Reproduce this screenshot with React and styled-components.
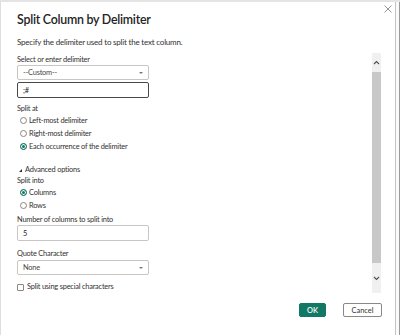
import React from "react";
import styled, { createGlobalStyle } from "styled-components";

const Global = createGlobalStyle`
  html, body { margin: 0; padding: 0; background: #fff; overflow: hidden; }
  body { font-family: Lato, "Open Sans", sans-serif; color: #323130; }
  * { box-sizing: border-box; }
`;

const Frame = styled.div`
  width: 400px;
  height: 335px;
  display: flex;
  flex-direction: column;
`;

const TopStrip = styled.div`
  height: 2px;
  background: #e4e4e4;
  flex: none;
`;

const Row = styled.div`
  flex: 1;
  display: flex;
`;

const Dialog = styled.div`
  width: 396px;
  border-left: 1px solid #dedede;
  border-right: 1px solid #c4c4c4;
  background: #fff;
  display: flex;
  flex-direction: column;
`;

const Gutter = styled.div`
  flex: 1;
  background: #fafafa;
  border-right: 1px solid #9a9a9a;
`;

const Header = styled.div`
  display: flex;
  justify-content: space-between;
  align-items: flex-start;
  height: 26px;
`;

const Title = styled.div`
  margin: 10px 0 0 16px;
  font-size: 12.4px;
  letter-spacing: -0.25px;
  line-height: 16px;
  font-weight: 600;
  color: #252423;
`;

const Close = styled.div`
  margin: 3px 3px 0 0;
  width: 8px;
  height: 8px;
  display: flex;
`;

const Main = styled.div`
  display: flex;
  align-items: flex-start;
  height: 265px;
`;

const Content = styled.div`
  flex: 1;
  padding-left: 16px;
  display: flex;
  flex-direction: column;
  align-items: flex-start;
  font-size: 7.4px;
  letter-spacing: -0.2px;
`;

const Subtitle = styled.div`
  margin-top: 8px;
  font-size: 8px;
  letter-spacing: -0.2px;
  line-height: 12px;
  color: #323130;
`;

const Label = styled.div`
  margin-top: ${(p) => p.$mt || 0}px;
  padding-left: ${(p) => p.$pl || 0}px;
  line-height: 10px;
  color: #323130;
  display: flex;
  align-items: center;
  gap: ${(p) => p.$gap || 0}px;
`;

const Field = styled.div`
  margin-top: ${(p) => p.$mt || 0}px;
  width: 132px;
  height: ${(p) => p.$h || 16}px;
  border: 1px solid ${(p) => (p.$focus ? "#4a4847" : "#c8c6c4")};
  border-radius: 2px;
  display: flex;
  align-items: center;
  justify-content: space-between;
  padding: 0 5px 0 5px;
  color: ${(p) => (p.$muted ? "#484644" : "#252423")};
  background: #fff;
`;

const Caret = styled.span`
  width: 0;
  height: 0;
  border-left: 2px solid transparent;
  border-right: 2px solid transparent;
  border-top: 2px solid #7a7876;
`;

const RadioRow = styled.div`
  height: 13px;
  display: flex;
  align-items: center;
  gap: 2px;
  padding-left: 3px;
  color: #323130;
`;

const Radio = styled.span`
  width: 7px;
  height: 7px;
  border-radius: 50%;
  border: 1px solid ${(p) => (p.$on ? "#117865" : "#8a8886")};
  background: ${(p) => (p.$on ? "#117865" : "#fff")};
  box-shadow: ${(p) => (p.$on ? "inset 0 0 0 1px #fff" : "none")};
  flex: none;
`;

const Check = styled.span`
  width: 7px;
  height: 7px;
  border: 1px solid #8a8886;
  border-radius: 1px;
  flex: none;
`;

const Scrollbar = styled.div`
  margin-top: 25px;
  margin-right: 14px;
  width: 9px;
  height: 240px;
  display: flex;
  flex-direction: column;
  background: #f0f0f0;
`;

const ScrollEnd = styled.div`
  height: ${(p) => p.$h}px;
  display: flex;
  align-items: center;
  justify-content: center;
`;

const Thumb = styled.div`
  height: 191px;
  background: #c8c8c8;
`;

const Footer = styled.div`
  margin-top: 10px;
  display: flex;
  justify-content: flex-end;
  gap: 17px;
  padding-right: 13px;
`;

const Button = styled.div`
  width: ${(p) => p.$w}px;
  height: 14px;
  border-radius: 2px;
  display: flex;
  align-items: center;
  justify-content: center;
  font-size: 7.4px;
  font-weight: ${(p) => (p.$primary ? 600 : 400)};
  background: ${(p) => (p.$primary ? "#117865" : "#fff")};
  color: ${(p) => (p.$primary ? "#fff" : "#323130")};
  border: 1px solid ${(p) => (p.$primary ? "#117865" : "#8a8886")};
`;

const Chevron = ({ up }) => (
  <svg width="7" height="5" viewBox="0 0 7 5">
    <path
      d={up ? "M1 4 L3.5 1.5 L6 4" : "M1 1 L3.5 3.5 L6 1"}
      fill="none"
      stroke="#505050"
      strokeWidth="1.1"
    />
  </svg>
);

const Tri = () => (
  <svg width="3" height="3" viewBox="0 0 3 3">
    <path d="M3 0 L3 3 L0 3 Z" fill="#323130" />
  </svg>
);

export default function App() {
  return (
    <>
      <Global />
      <Frame>
        <TopStrip />
        <Row>
          <Dialog>
            <Header>
              <Title>Split Column by Delimiter</Title>
              <Close>
                <svg width="8" height="8" viewBox="0 0 8 8">
                  <path d="M0.5 0.5 L7.5 7.5 M7.5 0.5 L0.5 7.5" stroke="#8a8886" strokeWidth="0.9" />
                </svg>
              </Close>
            </Header>
            <Main>
              <Content>
                <Subtitle>Specify the delimiter used to split the text column.</Subtitle>
                <Label $mt={7}>Select or enter delimiter</Label>
                <Field $h={15} $mt={0} $muted>
                  <span>--Custom--</span>
                  <Caret />
                </Field>
                <Field $mt={2} $focus>
                  <span>;#</span>
                </Field>
                <Label $mt={6}>Split at</Label>
                <RadioRow>
                  <Radio />
                  Left-most delimiter
                </RadioRow>
                <RadioRow>
                  <Radio />
                  Right-most delimiter
                </RadioRow>
                <RadioRow>
                  <Radio $on />
                  Each occurrence of the delimiter
                </RadioRow>
                <Label $mt={12} $gap={3} $pl={2}>
                  <Tri />
                  Advanced options
                </Label>
                <Label $mt={1}>Split into</Label>
                <RadioRow>
                  <Radio $on />
                  Columns
                </RadioRow>
                <RadioRow>
                  <Radio />
                  Rows
                </RadioRow>
                <Label $mt={3}>Number of columns to split into</Label>
                <Field $mt={0}>
                  <span>5</span>
                </Field>
                <Label $mt={8}>Quote Character</Label>
                <Field $h={15} $mt={1} $muted>
                  <span>None</span>
                  <Caret />
                </Field>
                <Label $mt={7} $gap={3}>
                  <Check />
                  Split using special characters
                </Label>
              </Content>
              <Scrollbar>
                <ScrollEnd $h={19}>
                  <Chevron up />
                </ScrollEnd>
                <Thumb />
                <ScrollEnd $h={30}>
                  <Chevron />
                </ScrollEnd>
              </Scrollbar>
            </Main>
            <Footer>
              <Button $primary $w={27}>OK</Button>
              <Button $w={39}>Cancel</Button>
            </Footer>
          </Dialog>
          <Gutter />
        </Row>
      </Frame>
    </>
  );
}
